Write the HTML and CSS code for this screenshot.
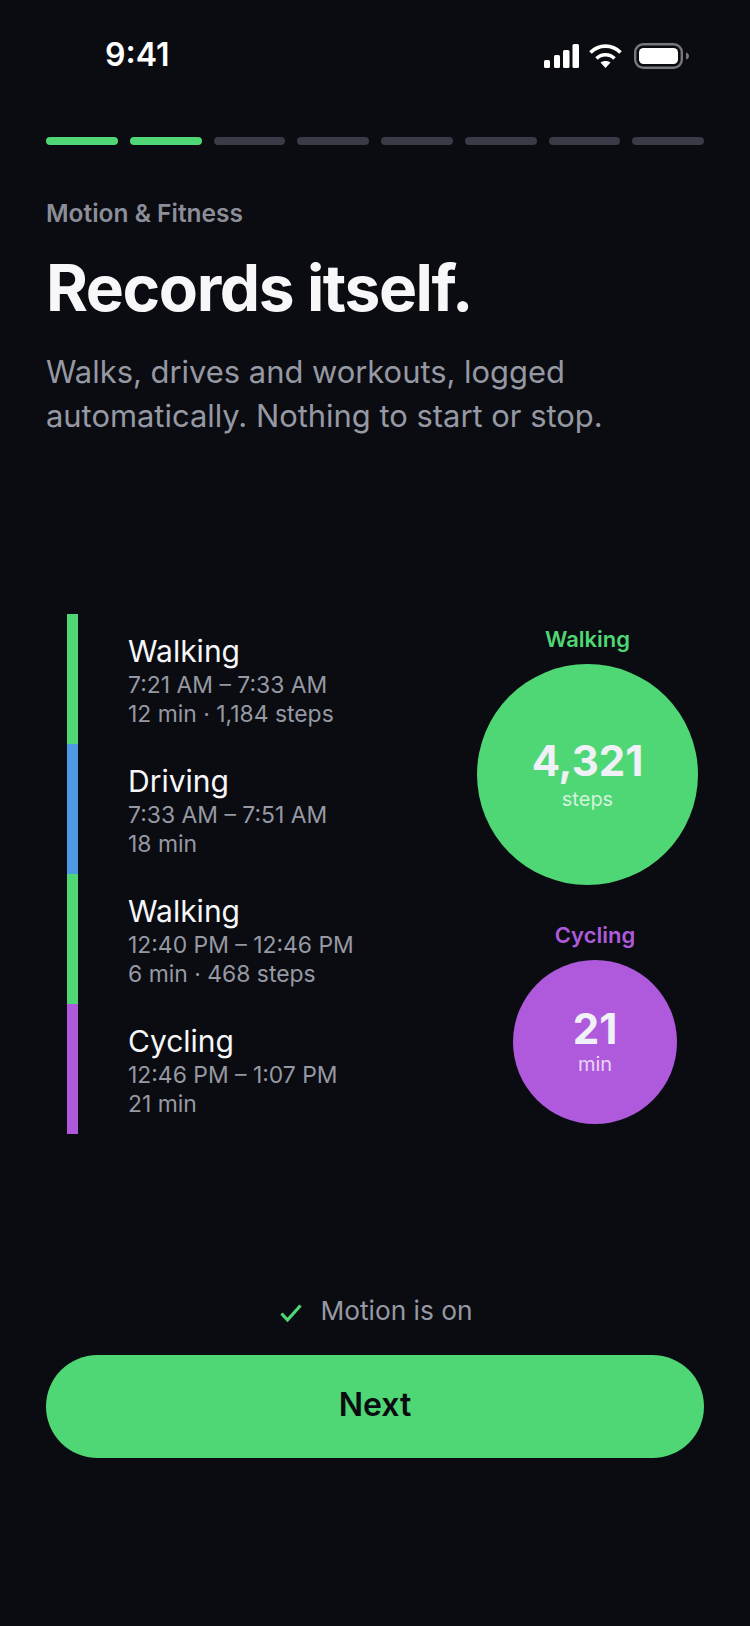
FILE: index.html
```html
<!DOCTYPE html>
<html lang="en">
<head>
  <meta charset="UTF-8">
  <meta name="viewport" content="width=device-width, initial-scale=1.0">
  <title>Motion &amp; Fitness</title>
  <link rel="stylesheet" href="styles.css">
</head>
<body>
  <div class="screen">
    <div class="status-bar">
      <span class="clock">9:41</span>
      <div class="status-icons">
        <svg class="icon-signal" width="35" height="24" viewBox="0 0 35 24" fill="#fff">
          <rect x="0" y="16" width="6" height="8" rx="1.500"/>
          <rect x="10" y="11" width="6" height="13" rx="1.500"/>
          <rect x="19" y="6" width="6.500" height="18" rx="1.500"/>
          <rect x="28.500" y="0" width="6.500" height="24" rx="1.500"/>
        </svg>
        <svg class="icon-wifi" width="33" height="24" viewBox="0 0 33 24" fill="none" stroke="#fff" stroke-width="3.600">
          <path d="M1.500 8.500C10 0 23 0 31.500 8.500"/>
          <path d="M7.500 14.500C12.500 9.500 20.500 9.500 25.500 14.500"/>
          <path d="M16.500 24L11.500 18.500C14.500 16.500 18.500 16.500 21.500 18.500Z" fill="#fff" stroke="none"/>
        </svg>
        <svg width="55" height="26" viewBox="0 0 55 26" fill="none">
          <rect x="1.200" y="1.200" width="46.600" height="23.600" rx="8" stroke="#77787d" stroke-width="2.400"/>
          <rect x="5" y="5" width="39" height="16" rx="4.500" fill="#fff"/>
          <path d="M52 9.500C54 10 55 11.500 55 13C55 14.500 54 16 52 16.500Z" fill="#77787d"/>
        </svg>
      </div>
    </div>

    <div class="progress">
      <span class="seg done"></span>
      <span class="seg done"></span>
      <span class="seg"></span>
      <span class="seg"></span>
      <span class="seg"></span>
      <span class="seg"></span>
      <span class="seg"></span>
      <span class="seg"></span>
    </div>

    <div class="intro">
      <div class="eyebrow">Motion &amp; Fitness</div>
      <h1>Records itself.</h1>
      <p>Walks, drives and workouts, logged automatically. Nothing to start or stop.</p>
    </div>

    <div class="activity">
      <div class="timeline">
        <div class="entry walk">
          <div class="entry-title">Walking</div>
          <div class="entry-sub">7:21 AM – 7:33 AM</div>
          <div class="entry-sub">12 min · 1,184 steps</div>
        </div>
        <div class="entry drive">
          <div class="entry-title">Driving</div>
          <div class="entry-sub">7:33 AM – 7:51 AM</div>
          <div class="entry-sub">18 min</div>
        </div>
        <div class="entry walk">
          <div class="entry-title">Walking</div>
          <div class="entry-sub">12:40 PM – 12:46 PM</div>
          <div class="entry-sub">6 min · 468 steps</div>
        </div>
        <div class="entry cycle">
          <div class="entry-title">Cycling</div>
          <div class="entry-sub">12:46 PM – 1:07 PM</div>
          <div class="entry-sub">21 min</div>
        </div>
      </div>

      <div class="bubbles">
        <div class="bubble-group walk-group">
          <div class="bubble-label">Walking</div>
          <div class="bubble big">
            <span class="bubble-value">4,321</span>
            <span class="bubble-unit">steps</span>
          </div>
        </div>
        <div class="bubble-group cycle-group">
          <div class="bubble-label">Cycling</div>
          <div class="bubble small">
            <span class="bubble-value">21</span>
            <span class="bubble-unit">min</span>
          </div>
        </div>
      </div>
    </div>

    <div class="motion-state">
      <svg class="check" width="22" height="18" viewBox="0 0 22 18" fill="none" stroke="#4fd675" stroke-width="3.200">
        <path d="M1.500 9.500L7.500 16L20.500 1.500"/>
      </svg>
      <span>Motion is on</span>
    </div>
    <button class="next"><span>Next</span></button>
  </div>
</body>
</html>
```

FILE: styles.css
```css
body {
  margin: 0;
  background-color: #0a0c11;
  font-family: Inter, "Liberation Sans", sans-serif;
  color: #fff;
}
.screen {
  width: 750px;
  height: 1626px;
  padding: 0 46px;
  box-sizing: border-box;
  overflow: hidden;
}
.status-bar {
  height: 137px;
  display: flex;
  justify-content: space-between;
  align-items: flex-start;
  padding: 36px 15px 0 59px;
  box-sizing: border-box;
}
.clock {
  font-size: 32px;
  font-weight: 600;
  line-height: 38px;
}
.status-icons {
  display: flex;
  align-items: center;
  margin-top: 7px;
}
.icon-signal {
  margin-right: 10px;
}
.icon-wifi {
  margin-right: 12px;
}
.progress {
  display: flex;
  gap: 12px;
}
.seg {
  flex: 1;
  height: 8px;
  border-radius: 4px;
  background-color: #393c46;
}
.seg.done {
  background-color: #4fd675;
}
.intro {
  margin-top: 53px;
}
.eyebrow {
  font-size: 24.500px;
  font-weight: 600;
  line-height: 30px;
  color: #8b8e98;
}
h1 {
  margin: 22px 0 0;
  font-size: 64px;
  font-weight: 700;
  line-height: 76px;
  letter-spacing: -1.400px;
  color: #f7f7f9;
}
.intro p {
  margin: 24px 0 0;
  font-size: 30.900px;
  line-height: 43.500px;
  color: #9699a3;
}
.activity {
  position: absolute;
  top: 614px;
  left: 67px;
  width: 631px;
  display: flex;
  justify-content: space-between;
}
.timeline {
  display: flex;
  flex-direction: column;
}
.entry {
  height: 130px;
  box-sizing: border-box;
  padding: 18px 0 0 50px;
  border-left: 11px solid #4fd675;
}
.entry.drive {
  border-left-color: #4f98e4;
}
.entry.cycle {
  border-left-color: #af5add;
}
.entry-title {
  font-size: 30px;
  line-height: 38px;
  margin-bottom: 1px;
  color: #f7f7f9;
}
.entry-sub {
  font-size: 22.900px;
  line-height: 29px;
  color: #9699a3;
}
.bubbles {
  display: flex;
  flex-direction: column;
  align-items: flex-end;
  padding-top: 7px;
}
.bubble-group {
  display: flex;
  flex-direction: column;
  align-items: center;
}
.cycle-group {
  margin-top: 32px;
  margin-right: 21px;
}
.bubble-label {
  font-size: 22px;
  font-weight: 600;
  line-height: 36px;
  height: 43px;
}
.walk-group .bubble-label {
  color: #4fd675;
}
.cycle-group .bubble-label {
  color: #af5add;
}
.bubble {
  border-radius: 50%;
  display: flex;
  flex-direction: column;
  align-items: center;
  justify-content: center;
  box-sizing: border-box;
}
.bubble.big {
  width: 221px;
  height: 221px;
  padding-bottom: 2px;
  background-color: #4fd675;
}
.bubble.small {
  width: 164px;
  height: 164px;
  padding-bottom: 5px;
  background-color: #af5add;
}
.bubble-value {
  font-size: 42px;
  font-weight: 700;
  line-height: 50px;
  color: #f0f1f6;
}
.bubble-unit {
  font-size: 20px;
  line-height: 24px;
  margin-top: 1px;
  color: rgba(255, 255, 255, 0.75);
}
.small .bubble-unit {
  margin-top: -2px;
}
.motion-state {
  position: absolute;
  top: 1292px;
  left: 0;
  width: 750px;
  padding-left: 3px;
  box-sizing: border-box;
  display: flex;
  justify-content: center;
  align-items: center;
  gap: 18px;
  font-size: 26.300px;
  line-height: 38px;
  color: #9699a3;
}
.check {
  margin-top: 4px;
}
.next {
  position: absolute;
  top: 1355px;
  left: 46px;
  width: 658px;
  height: 103px;
  padding: 0 0 4px;
  border: none;
  border-radius: 52px;
  background-color: #4fd675;
  color: #0a0c11;
  font-family: inherit;
  font-size: 32px;
  font-weight: 600;
}
```
